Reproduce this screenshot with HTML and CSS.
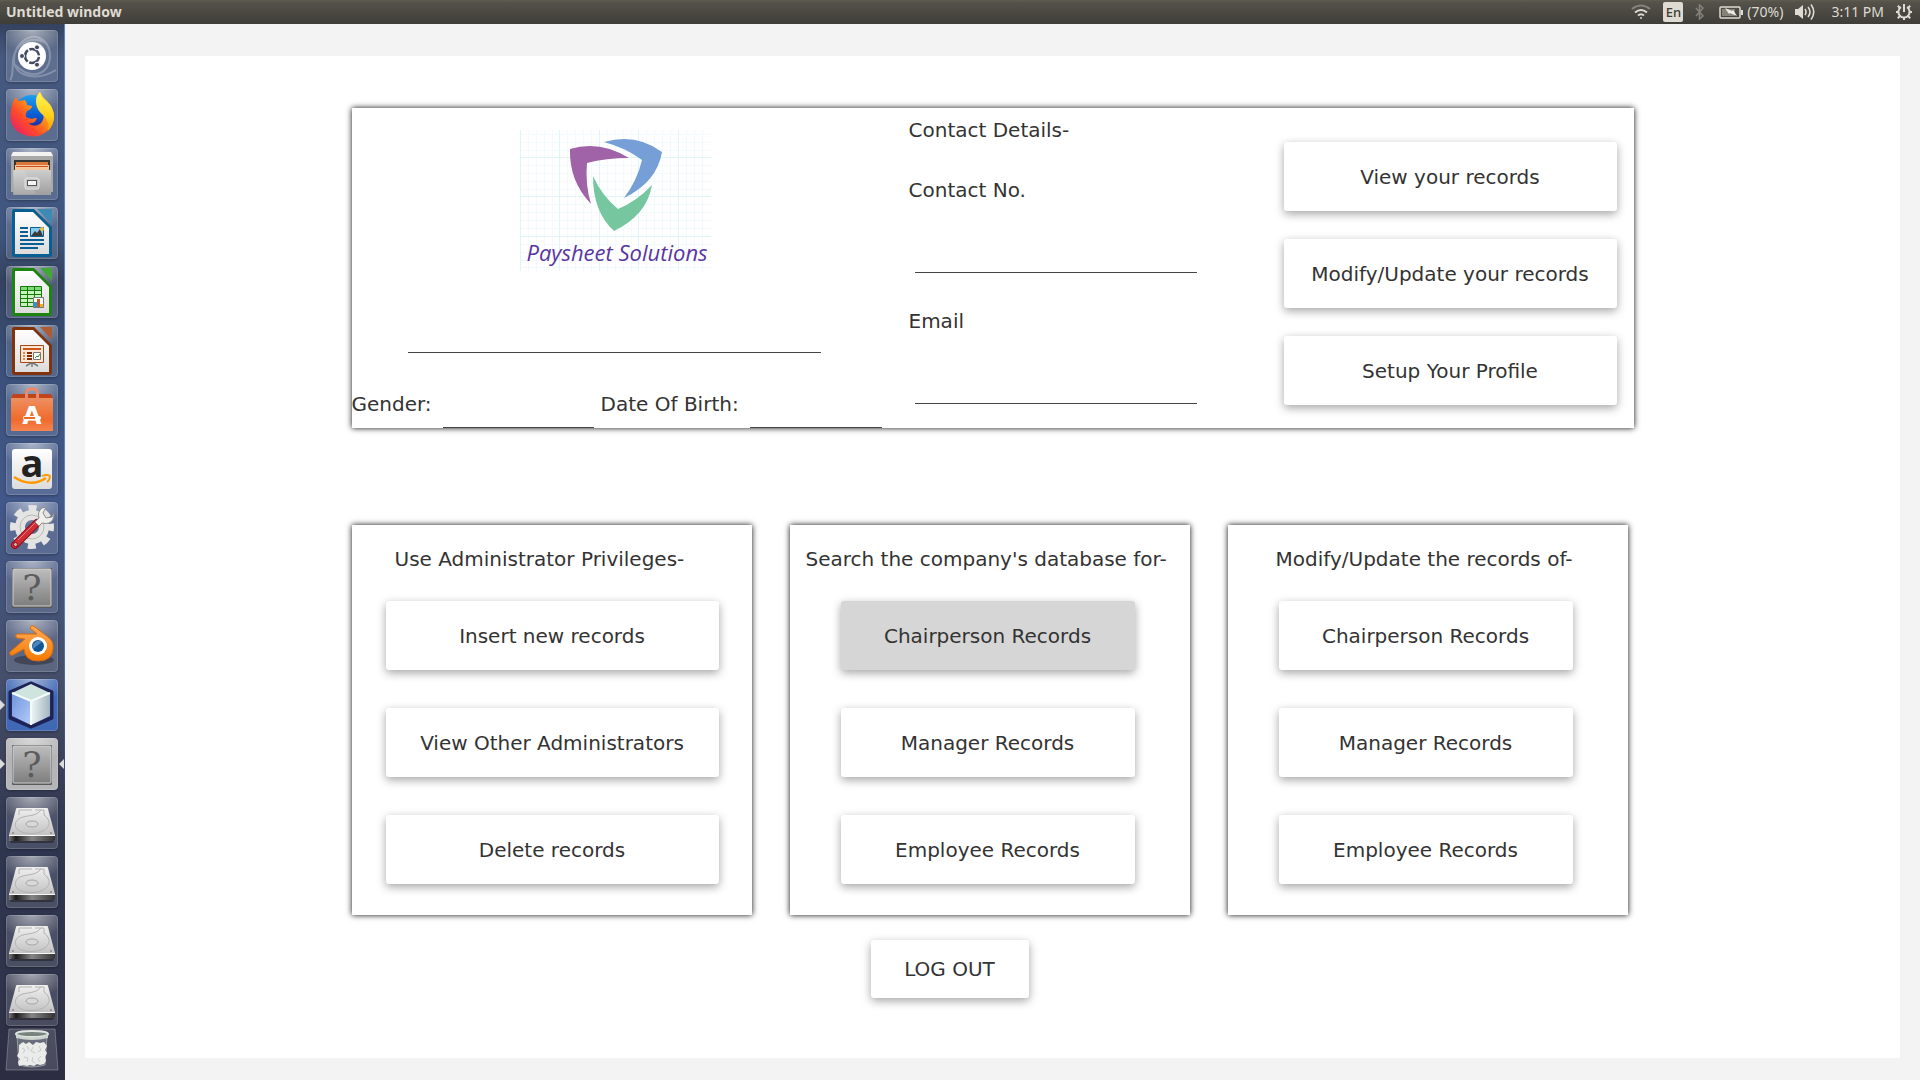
FILE: index.html
```html
<!DOCTYPE html>
<html lang="en">
<head>
<meta charset="utf-8">
<title>Untitled window</title>
<link rel="stylesheet" href="styles.css">
</head>
<body>
<svg class="defs" aria-hidden="true">
  <defs>
    <linearGradient id="silver" x1="0" y1="0" x2="0" y2="1"><stop offset="0" stop-color="#f0f0f0"/><stop offset="1" stop-color="#b8b8b8"/></linearGradient>
    <linearGradient id="grey" x1="0" y1="0" x2="0" y2="1"><stop offset="0" stop-color="#bdbdbd"/><stop offset="1" stop-color="#7e7e7e"/></linearGradient>
    <linearGradient id="paper" x1="0" y1="0" x2="0" y2="1"><stop offset="0" stop-color="#ffffff"/><stop offset="1" stop-color="#dcdcdc"/></linearGradient>
    <linearGradient id="fox" x1="1" y1="0" x2="0" y2="1"><stop offset="0" stop-color="#fff14f"/><stop offset=".35" stop-color="#ffa90f"/><stop offset=".65" stop-color="#ff4a2a"/><stop offset="1" stop-color="#e0107c"/></linearGradient>
    <linearGradient id="foxtail" x1="0" y1="0" x2="0" y2="1"><stop offset="0" stop-color="#fff65a"/><stop offset=".6" stop-color="#ffd01c"/><stop offset="1" stop-color="#ff9a0a"/></linearGradient>
    <linearGradient id="globe" x1="0" y1="0" x2="0" y2="1"><stop offset="0" stop-color="#1c9ff2"/><stop offset=".6" stop-color="#0a56d0"/><stop offset="1" stop-color="#3a1880"/></linearGradient>
    <linearGradient id="orange" x1="0" y1="0" x2="0" y2="1"><stop offset="0" stop-color="#ffab5c"/><stop offset="1" stop-color="#f57a00"/></linearGradient>
    <linearGradient id="bag" x1="0" y1="0" x2="0" y2="1"><stop offset="0" stop-color="#ee9060"/><stop offset=".65" stop-color="#f06a2c"/><stop offset="1" stop-color="#f58450"/></linearGradient>
    <linearGradient id="cubeLeft" x1="0" y1="0" x2="1" y2="1"><stop offset="0" stop-color="#6f93de"/><stop offset="1" stop-color="#b4cdf8"/></linearGradient>
    <linearGradient id="cubeRight" x1="0" y1="0" x2="1" y2="0"><stop offset="0" stop-color="#eef6f8"/><stop offset="1" stop-color="#a3b5bd"/></linearGradient>
    <linearGradient id="diskFront" x1="0" y1="0" x2="1" y2="0"><stop offset="0" stop-color="#777"/><stop offset=".15" stop-color="#1c1c1c"/><stop offset=".5" stop-color="#868686"/><stop offset="1" stop-color="#333"/></linearGradient>
    <symbol id="unknown" viewBox="0 0 52 52">
      <rect x="6" y="7" width="40" height="40" rx="1" fill="#5a5a5a"/>
      <rect x="7" y="8" width="38" height="37" rx="1" fill="url(#grey)" stroke="#d0d0d0"/>
      <text x="26" y="39" text-anchor="middle" class="unknown-mark">?</text>
    </symbol>
    <symbol id="disk" viewBox="0 0 52 52">
      <path d="M4 40h44v4q0 2-2 2H6q-2 0-2-2z" fill="#111" opacity=".45"/>
      <path d="M11 11h30q1 0 1 1l7 26v5q0 1-1 1H4q-1 0-1-1v-5l7-26q0-1 1-1z" fill="url(#silver)"/>
      <path d="M3 39h46v4q0 1-1 1H4q-1 0-1-1z" fill="url(#diskFront)"/>
      <path d="M3 38.500h46" stroke="#f7f7f7"/>
      <path d="M38 18c7 5 7 12-1 16s-20 3-25-1-3-11 5-13 13-1 18-7M13 13v5M13 13h13M38 13v5M29 13h9" fill="none" stroke="#b3b3b3"/>
      <ellipse cx="26" cy="27" rx="6" ry="3" fill="#d8d8d8" stroke="#a5a5a5"/>
      <circle cx="7" cy="36" r="1" fill="#888"/><circle cx="45" cy="36" r="1" fill="#888"/>
    </symbol>
  </defs>
</svg>

<header class="topbar">
  <span class="window-title">Untitled window</span>
  <div class="indicators">
    <svg class="wifi" width="20" height="16" viewBox="0 0 20 16" fill="none" stroke="#dfdbd2" stroke-width="2"><path d="M1 5q9-7 18 0" stroke="#85827a"/><path d="M4 8.500q6-5 12 0M7 11.500q3-2.500 6 0"/><circle cx="10" cy="14" r="1" fill="#dfdbd2" stroke="none"/></svg>
    <span class="keyboard">En</span>
    <svg class="bluetooth" width="10" height="16" viewBox="0 0 10 16" fill="none" stroke="#85827a" stroke-width="1.500"><path d="M1 4l7 8-3.500 3V1L8 4l-7 8"/></svg>
    <span class="battery">
      <svg width="24" height="13" viewBox="0 0 24 13"><rect x="1" y="1" width="20" height="11" rx="1" fill="none" stroke="#dfdbd2" stroke-width="1.500"/><path d="M22 4h2v5h-2z" fill="#dfdbd2"/><path d="M3 3h13v7H3z" fill="#85827a"/><path d="M6 2l7 3 1-1 4 6-7-3-1 1z" fill="#f0ece4"/></svg>
      <span>(70%)</span>
    </span>
    <svg class="volume" width="20" height="18" viewBox="0 0 20 18"><path d="M0 6h3l5-4v14l-5-4H0z" fill="#dfdbd2"/><path d="M10 6q2 3 0 6M13 4q4 5 0 10M16 1.500q5.500 7.500 0 15" fill="none" stroke="#dfdbd2" stroke-width="1.600"/></svg>
    <time>3:11 PM</time>
    <svg class="session" width="16" height="16" viewBox="0 0 16 16" fill="none" stroke="#dfdbd2" stroke-width="2"><path d="M5 3.200a5.600 5.600 0 1 0 6 0"/><path d="M8 0v8"/><path d="M0 8h3M13 8h3M8 13v3M1.800 1.800l2.200 2.200M14.200 1.800l-2.200 2.200M1.800 14.200l2.200-2.200M14.200 14.200l-2.200-2.200"/></svg>
  </div>
</header>

<div class="desktop">
  <nav class="launcher" aria-label="Launcher">
    <ul class="apps">
      <li><button class="tile" aria-label="Dash"><svg viewBox="0 0 52 52"><path d="M4 50C10 44 2 28 14 14S44 8 44 26 26 52 8 34M50 40C30 52 8 46 8 30S24 6 38 12" fill="none" stroke="#fff" stroke-opacity=".25" stroke-width="2"/><circle cx="26" cy="26" r="14" fill="#fff"/><circle cx="26" cy="26" r="7" fill="none" stroke="#434b62" stroke-width="2.500" stroke-dasharray="13 1.660" stroke-dashoffset="-.8"/><g fill="#434b62" stroke="#fff"><circle cx="16" cy="26" r="2.500"/><circle cx="31" cy="17.300" r="2.500"/><circle cx="31" cy="34.700" r="2.500"/></g></svg></button></li>
      <li><button class="tile" aria-label="Firefox"><svg viewBox="0 0 52 52"><circle cx="26" cy="24" r="18" fill="url(#globe)"/><path d="M10 8q1 3 3 4l6-1q2 3 2 5l5 1q0 3-5 5-2 3-1 6 5 3 9 1 3 0 1 2-2 4-8 3 6 5 12 1 5-4 3-12-6-6-7-11 0-6 4-9 2 5 7 9 7 7 7 15 0 10-8 16-8 6-17 4Q11 45 7 37 3 30 5 22 6 13 10 8z" fill="url(#fox)"/><path d="M34 3q1 5 7 10 6 5 7 14 0 9-6 15 2-8-3-14-9-7-9-15 0-6 4-10z" fill="url(#foxtail)"/></svg></button></li>
      <li><button class="tile" aria-label="Files"><svg viewBox="0 0 52 52"><path d="M7 4h38l2 4v36H5V8z" fill="#a9a9a7"/><path d="M7 4h38l2 4H5z" fill="#f3f3f1"/><path d="M8 12h36v12H8z" fill="#353535"/><path d="M10 14h32v9H10z" fill="#d9783a"/><path d="M9 17h34v6H9z" fill="#f6c59a"/><path d="M10 18.500h32" stroke="#cc4f22"/><path d="M7 22h38v25H7z" fill="url(#grey)"/><path d="M7 22h38v25H7z" fill="#fff" opacity=".25"/><path d="M8 22h10l12 24H8z" fill="#fff" opacity=".12"/><rect x="19" y="30" width="14" height="11" rx="2" fill="#c6c6c4" stroke="#e6e6e6"/><rect x="21.500" y="32.500" width="9" height="5" fill="#f4f4f4" stroke="#555"/></svg></button></li>
      <li><button class="tile" aria-label="Writer"><svg viewBox="0 0 52 52"><path d="M8 2h20l18 18v27q0 3-3 3H9q-3 0-3-3V5q0-3 2-3z" fill="#0a5f92"/><path d="M9 5h18l16 16v26H9z" fill="url(#paper)"/><path d="M31 2h15v15z" fill="#3d8bb5"/><path d="M27 5l16 16" stroke="#9aa" stroke-width="1"/><path d="M14 21h8M14 25h8M14 29h8M14 33h24M14 37h24M14 41h18" stroke="#0b5f94" stroke-width="2"/><path d="M24.500 20.500h13v9h-13z" fill="#8cc9ee" stroke="#0b5f94"/><path d="M25 29l4-5 2 2 3-4 3 7z" fill="#3b3b3b"/><circle cx="36" cy="22" r="2" fill="#edc13c"/></svg></button></li>
      <li><button class="tile" aria-label="Calc"><svg viewBox="0 0 52 52"><path d="M8 2h20l18 18v27q0 3-3 3H9q-3 0-3-3V5q0-3 2-3z" fill="#1d8410"/><path d="M9 5h18l16 16v26H9z" fill="url(#paper)"/><path d="M34 2h12v13z" fill="#45a638"/><path d="M27 5l16 16" stroke="#9a9"/><path d="M14.500 20.500h21v20h-21z" fill="#c9f2c1" stroke="#137a08"/><path d="M15 21h20v4H15z" fill="#7ddb78"/><path d="M14 24.500h22M14 28.500h22M14 32.500h22M14 36.500h22M21.500 20v21M28.500 20v21" stroke="#137a08"/><path d="M27.500 31.500h10v10h-10z" fill="#fff" stroke="#777"/><path d="M28 36h3v5h-3z" fill="#1c99e0"/><path d="M31 33h3v8h-3z" fill="#cf5517"/><path d="M34 38h3v3h-3z" fill="#edb51b"/></svg></button></li>
      <li><button class="tile" aria-label="Impress"><svg viewBox="0 0 52 52"><path d="M8 2h20l18 18v27q0 3-3 3H9q-3 0-3-3V5q0-3 2-3z" fill="#80330c"/><path d="M9 5h18l16 16v26H9z" fill="url(#paper)"/><path d="M34 2h12v13z" fill="#ad5c34"/><path d="M27 5l16 16" stroke="#a99"/><path d="M14.500 20.500h23v17h-23z" fill="#fde8d8" stroke="#a6480f"/><path d="M17 24h18" stroke="#ce5713" stroke-width="2"/><path d="M17 28h2M17 31h2M17 34h2" stroke="#e38752" stroke-width="2"/><path d="M21 28h5M21 31h5M21 34h5" stroke="#802c06" stroke-width="2"/><path d="M27.500 27.500h7v7h-7z" fill="#fff" stroke="#777"/><path d="M29 33l2-2 1 1 2-3" stroke="#23962c" fill="none"/><path d="M20 41l5-3h2l5 3M26 38v4" stroke="#777" stroke-width="1.500" fill="none"/></svg></button></li>
      <li><button class="tile" aria-label="Ubuntu Software"><svg viewBox="0 0 52 52"><path d="M7 10h38l2 4H5z" fill="#c0441c"/><path d="M5 14h42v33H5z" fill="url(#bag)"/><path d="M20.500 18V9q0-4 4-4h3q4 0 4 4v9" fill="none" stroke="#ea8a6c" stroke-width="3"/><text x="26" y="40" text-anchor="middle" class="software-mark">A</text><rect x="17" y="32" width="18" height="4" rx="2" fill="#fff"/><path d="M18 34h11" stroke="#ee6a2a" stroke-width="2"/></svg></button></li>
      <li><button class="tile" aria-label="Amazon"><svg viewBox="0 0 52 52"><rect x="6" y="6" width="40" height="40" rx="3" fill="url(#paper)"/><text x="26" y="34" text-anchor="middle" class="amazon-mark">a</text><path d="M8 34q17 11 32 1" fill="none" stroke="#ff9900" stroke-width="2.500"/><path d="M36 33q5-2 8 0 0 4-3 6" fill="none" stroke="#ff9900" stroke-width="1.800"/></svg></button></li>
      <li><button class="tile" aria-label="System Settings"><svg viewBox="0 0 52 52"><circle cx="26" cy="25" r="19" fill="none" stroke="#e4e4e2" stroke-width="6" stroke-dasharray="8 6.920" stroke-dashoffset="4"/><circle cx="26" cy="25" r="12" fill="none" stroke="#e4e4e2" stroke-width="10"/><circle cx="26" cy="25" r="12" fill="none" stroke="#bababa"/><path d="M9 43L31 21" stroke="#8f1119" stroke-width="8" stroke-linecap="round"/><path d="M9 43L31 21" stroke="#cf2c35" stroke-width="6" stroke-linecap="round"/><path d="M12 38L30 20" stroke="#e8777c"/><path d="M29 20l4-4q-2-6 3-10l4-1-3 6 3 5 6-1 2-4q0 8-5 10-3 1-7 0l-3 3z" fill="#efefed" stroke="#8c8c8a"/><circle cx="9.500" cy="42.500" r="2" fill="#cfb4b4" stroke="#8f1119"/></svg></button></li>
      <li><button class="tile" aria-label="Unknown application"><svg><use href="#unknown"/></svg></button></li>
      <li><button class="tile" aria-label="Blender"><svg viewBox="0 0 52 52"><ellipse cx="28" cy="40" rx="20" ry="5" opacity=".3"/><path d="M25 6q2-1 4 1l13 10q6 4 5 12-1 12-15 12-13 0-14-12L7 35q-4 1-3-3l15-13-8-1q-3-2 0-4h20l-7-6z" fill="url(#orange)" stroke="#db6a0a"/><circle cx="32" cy="26" r="9" fill="#fff"/><circle cx="32" cy="26" r="6" fill="#0f5597"/><path d="M27 29a6 6 0 0 1 9-7z" fill="#4c83b8"/></svg></button></li>
      <li class="running"><button class="tile tile-blue" aria-label="NetBeans"><svg viewBox="0 0 52 52"><path d="M25 4l21 9v26L25 48 4 39V13z" fill="#24346f" stroke="#1d2356" stroke-width="3" stroke-linejoin="round"/><path d="M6 14l19 8v24L6 37z" fill="url(#cubeLeft)"/><path d="M25 22l19-8v23l-19 9z" fill="url(#cubeRight)"/><path d="M25 5l19 9-19 8-19-8z" fill="#cfe3df"/><path d="M6 14l19 8 19-8M25 22v24" fill="none" stroke="#f4fbfb" stroke-width="2"/></svg></button></li>
      <li class="running focused"><button class="tile tile-light" aria-label="Untitled window"><svg><use href="#unknown"/></svg></button></li>
      <li><button class="tile" aria-label="Disk 1"><svg><use href="#disk"/></svg></button></li>
      <li><button class="tile" aria-label="Disk 2"><svg><use href="#disk"/></svg></button></li>
      <li><button class="tile" aria-label="Disk 3"><svg><use href="#disk"/></svg></button></li>
      <li><button class="tile" aria-label="Disk 4"><svg><use href="#disk"/></svg></button></li>
    </ul>
    <button class="trash" aria-label="Trash"><svg viewBox="0 0 54 44"><path d="M4 1h46l3 41H1z" fill="#fff" fill-opacity=".14" stroke="#fff" stroke-opacity=".25" stroke-linejoin="round"/><path d="M12 8h30l-2 29q-13 4-26 0z" fill="#e8eeea" fill-opacity=".2" stroke="#bcc6c0" stroke-opacity=".6"/><path d="M14 17l4-3 3 2 3-2 4 3 3-3 4 1 4-1 3 4-2 4 2 3-2 4 1 4-2 3-4 1-3-1-3 2-4-1-3 1-4-1-4 1-1-4 2-3-3-3 2-4z" fill="#e9ece8"/><path d="M17 20l3 2-2 3M22 18l2 4M28 19l-2 4 4 2M34 18l2 4-3 2M19 29l4 1-1 4M28 29l-1 4 3 2M36 28l-3 3 2 3" fill="none" stroke="#c6cbc7"/><ellipse cx="27" cy="6" rx="16" ry="3" fill="#78837e" stroke="#dfe6e1" stroke-width="2"/><path d="M11 7q16 5 32 0v3q-16 4-32 0z" fill="#cbd3ce"/></svg></button>
  </nav>

  <main class="window">
    <div class="panel">
      <div class="dashboard">
        <section class="card profile">
          <div class="identity">
            <svg class="logo" width="191" height="141" viewBox="0 0 191 141" role="img" aria-label="Paysheet Solutions">
              <path d="M0 4.500h191M0 12.500h191M0 20.500h191M0 35.500h191M0 43.500h191M0 51.500h191M0 59.500h191M0 74.500h191M0 82.500h191M0 90.500h191M0 98.500h191M0 114.500h191M0 122.500h191M0 130.500h191M0 137.500h191M8.500 0v141M16.500 0v141M24.500 0v141M32.500 0v141M47.500 0v141M55.500 0v141M63.500 0v141M71.500 0v141M87.500 0v141M95.500 0v141M103.500 0v141M111.500 0v141M126.500 0v141M134.500 0v141M142.500 0v141M150.500 0v141M166.500 0v141M174.500 0v141M182.500 0v141" stroke="#f3fafb"/>
              <path d="M0 27.500h191M0 66.500h191M0 106.500h191M.5 0v141M39.500 0v141M79.500 0v141M118.500 0v141M158.500 0v141" stroke="#dff5f7"/>
              <path d="M50 19Q80 10 109 28Q86 28 67 33Q65 54 71 74Q49 51 50 19z" fill="#a063a8"/>
              <path d="M84 12Q116 3 142 22Q137 52 104 68Q117 51 122 30Q106 18 84 12z" fill="#759fd6"/>
              <path d="M73 46Q82 66 98 79Q117 71 132 55Q127 85 94 101Q73 82 73 46z" fill="#76c7a0"/>
              <text x="97" y="131" text-anchor="middle" class="logo-name">Paysheet Solutions</text>
            </svg>
            <input class="line name-line" type="text" aria-label="Name">
            <div class="facts">
              <div class="fact"><label for="gender">Gender:</label><input class="line gender-line" id="gender" type="text"></div>
              <div class="fact"><label for="birth">Date Of Birth:</label><input class="line birth-line" id="birth" type="text"></div>
            </div>
          </div>
          <div class="contact">
            <h2>Contact Details-</h2>
            <div class="field"><label for="phone">Contact No.</label><input class="line" id="phone" type="text"></div>
            <div class="field"><label for="email">Email</label><input class="line" id="email" type="text"></div>
          </div>
          <div class="profile-actions">
            <button class="action">View your records</button>
            <button class="action">Modify/Update your records</button>
            <button class="action">Setup Your Profile</button>
          </div>
        </section>

        <div class="groups">
          <section class="card group admin">
            <h2>Use Administrator Privileges-</h2>
            <button class="action">Insert new records</button>
            <button class="action">View Other Administrators</button>
            <button class="action">Delete records</button>
          </section>
          <section class="card group search">
            <h2>Search the company's database for-</h2>
            <button class="action selected">Chairperson Records</button>
            <button class="action">Manager Records</button>
            <button class="action">Employee Records</button>
          </section>
          <section class="card group modify">
            <h2>Modify/Update the records of-</h2>
            <button class="action">Chairperson Records</button>
            <button class="action">Manager Records</button>
            <button class="action">Employee Records</button>
          </section>
        </div>

        <button class="action logout">LOG OUT</button>
      </div>
    </div>
  </main>
</div>
</body>
</html>
```
FILE: styles.css
```css
* { box-sizing: border-box; }

body {
  margin: 0;
  min-height: 100vh;
  display: flex;
  flex-direction: column;
  background: #f3f3f3;
  color: #333;
  font: 20px/24px "DejaVu Sans", sans-serif;
}

button, input { font: inherit; color: inherit; }
h2 { margin: 0; font: inherit; }
.defs { position: absolute; width: 0; height: 0; }

/* Top bar */
.topbar {
  display: flex;
  justify-content: space-between;
  align-items: center;
  height: 24px;
  padding: 0 8px 0 6px;
  background: linear-gradient(#5e5b50, #55524a 10%, #3e3d38);
  color: #dfdbd2;
  font: 14px/24px "Noto Sans", sans-serif;
}
.window-title { font-weight: 700; }
.indicators { display: flex; align-items: center; gap: 12px; }
.indicators time { margin-left: 4px; }
.battery { display: flex; align-items: center; gap: 4px; margin-left: 2px; }
.keyboard {
  width: 20px;
  height: 20px;
  border-radius: 2px;
  background: #dfdbd2;
  color: #3e3d38;
  font-size: 13px;
  font-weight: 500;
  line-height: 20px;
  text-align: center;
}

/* Launcher */
.desktop { flex: 1; display: flex; }
.launcher {
  flex: none;
  width: 65px;
  padding: 6px 0 8px;
  border-right: 1px solid #4d6ea8;
  border-image: linear-gradient(#5b80bd, #5b80bd 55%, #333a50 75%, #30313f) 1;
  border-width: 0 1px 0 0;
  background: linear-gradient(#34425f, #46597f 3%, #405680 20%, #34425f 24%, #3a5079 32%, #42588a 45%, #454f6b 62%, #3b4159 70%, #2e3650 78%, #30344b 92%, #2c2c42);
}
.apps {
  display: flex;
  flex-direction: column;
  gap: 7px;
  margin: 0;
  padding: 0 6px;
  list-style: none;
}
.apps li { position: relative; display: flex; }
.tile {
  display: flex;
  width: 52px;
  height: 52px;
  padding: 0;
  border: 0;
  border-radius: 4px;
  box-shadow: inset 0 0 0 1px rgba(255, 255, 255, .16), 0 1px 3px rgba(0, 0, 0, .3);
  background:
    radial-gradient(ellipse 34px 24px at 50% 0, rgba(255, 255, 255, .5), rgba(255, 255, 255, 0)),
    rgba(255, 255, 255, .13);
}
.tile svg { width: 52px; height: 52px; overflow: visible; }
.tile-blue { background-color: #4068b4; }
.tile-light { background-color: #b5b5b7; }
.running::before, .focused::after {
  content: "";
  position: absolute;
  top: 21px;
  border: 5px solid transparent;
}
.running::before { left: -6px; border-left-color: #dcdcdc; border-right: 0; }
.focused::after { right: -6px; border-right-color: #dcdcdc; border-left: 0; }
.trash {
  display: flex;
  width: 54px;
  height: 44px;
  margin: 2px 0 0 5px;
  padding: 0;
  border: 0;
  background: none;
}
.trash svg { width: 54px; height: 44px; }
.unknown-mark { font: 36px "DejaVu Serif", serif; fill: #5c5c5c; }
.software-mark { font: 700 25px "DejaVu Sans", sans-serif; fill: #fff; }
.amazon-mark { font: 700 38px "Open Sans", sans-serif; fill: #222; }

/* Application window */
.window { flex: 1; display: flex; min-width: 0; padding: 32px 20px 22px; }
.panel { flex: 1; min-width: 0; padding: 52px 20px 60px; background: #fff; }
.dashboard { max-width: 1282px; margin: 0 auto; }
.card { background: #fff; box-shadow: 0 0 6px rgba(0, 0, 0, .95); }

.action {
  display: block;
  width: 333px;
  max-width: 100%;
  height: 69px;
  padding: 0;
  border: 0;
  border-radius: 3px;
  background: #fff;
  box-shadow: 0 3px 10px rgba(0, 0, 0, .36);
}
.action.selected { background: #d6d6d6; }

.line {
  display: block;
  width: 282px;
  height: 32px;
  padding: 0;
  border: 0;
  border-bottom: 1px solid #444;
  border-radius: 0;
  background: transparent;
  outline: 0;
}

/* Profile card */
.profile { display: grid; grid-template-columns: 557fr 375fr 350fr; }
.identity { padding-top: 22px; }
.logo { display: block; margin-left: 168px; }
.logo-name { font: italic 22px "Open Sans", sans-serif; fill: #5a36a0; }
.name-line { width: 413px; margin: 50px 0 39px 56px; }
.facts { display: flex; gap: 7px; }
.fact { display: flex; gap: 11px; white-space: nowrap; }
.fact .line { height: 36px; }
.fact .gender-line { width: 151px; }
.fact .birth-line { width: 132px; }
.contact { padding-top: 10px; }
.field { margin-top: 36px; }
.field label { display: block; }
.field .line { margin: 39px 0 0 6px; }
.profile-actions {
  display: flex;
  flex-direction: column;
  align-items: flex-end;
  gap: 28px;
  padding: 34px 17px 0 0;
}

/* Record groups */
.groups {
  display: grid;
  grid-template-columns: repeat(3, 1fr);
  gap: 38px;
  max-width: 1276px;
  margin-top: 97px;
}
.group { padding: 22px 0 31px; }
.group .action { margin-left: 51px; width: 294px; }
.group .action + .action { margin-top: 38px; }
.group h2 { margin-bottom: 30px; }
.admin h2 { padding-left: 43px; }
.search h2 { padding-left: 16px; }
.modify h2 { padding-left: 48px; }
.group.admin .action { width: 333px; margin-left: 34px; }

.logout { width: 158px; height: 58px; margin: 25px 0 0 519px; }
```
